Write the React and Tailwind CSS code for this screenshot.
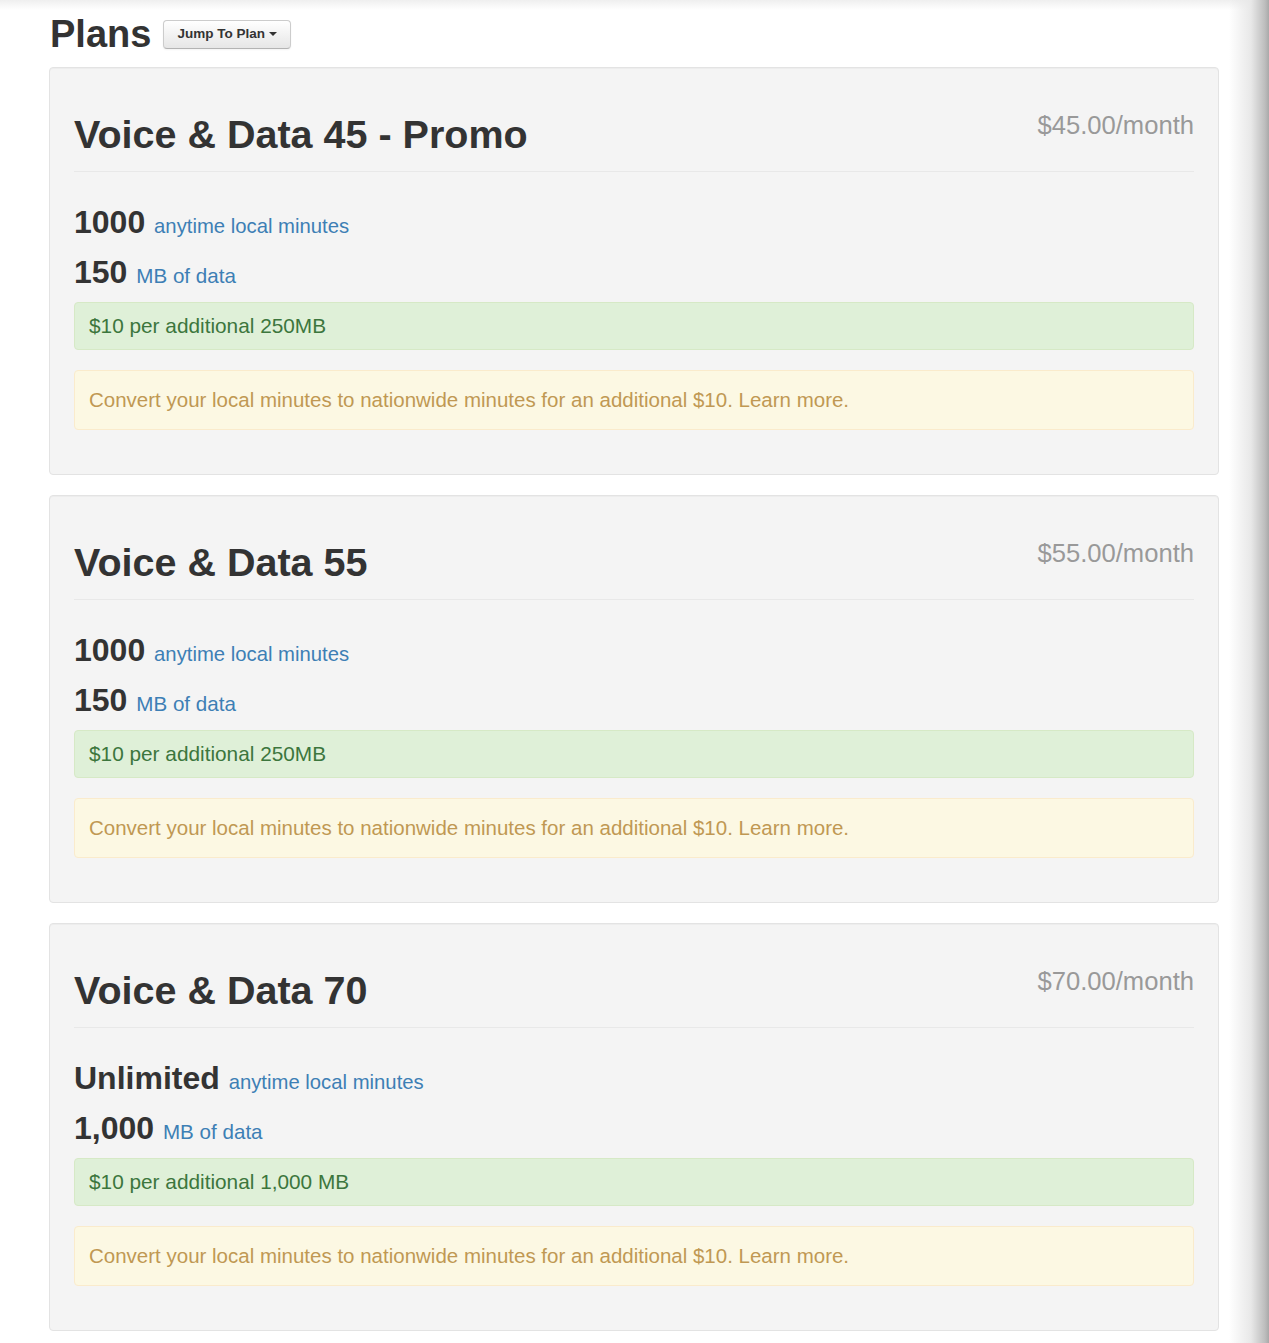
import React from 'react';

const plans = [
  {
    name: 'Voice & Data 45 - Promo',
    price: '$45.00/month',
    minutes: '1000',
    data: '150',
    extra: '$10 per additional 250MB',
  },
  {
    name: 'Voice & Data 55',
    price: '$55.00/month',
    minutes: '1000',
    data: '150',
    extra: '$10 per additional 250MB',
  },
  {
    name: 'Voice & Data 70',
    price: '$70.00/month',
    minutes: 'Unlimited',
    data: '1,000',
    extra: '$10 per additional 1,000 MB',
  },
];

function PlanCard({ plan }) {
  return (
    <div className="rounded-[4px] border border-[#e3e3e3] bg-[#f4f4f4] px-6 pt-[46px] pb-[44px] shadow-[inset_0_1px_1px_rgba(0,0,0,0.03)]">
      {/* header */}
      <div className="flex items-start justify-between border-b border-[#e8e8e8] pb-[17px]">
        <h1 className="text-[39.5px] font-bold leading-[40px] text-[#333]">{plan.name}</h1>
        <span className="mt-[-9px] text-[25.6px] leading-[40px] text-[#999]">{plan.price}</span>
      </div>

      {/* features */}
      <div className="mt-[25px] h-[50px] leading-[50px]">
        <span className="text-[32px] font-bold text-[#333]">{plan.minutes} </span>
        <span className="text-[20.3px] text-[#3d7fb5]">anytime local minutes</span>
      </div>
      <div className="h-[50px] leading-[50px]">
        <span className="text-[32px] font-bold text-[#333]">{plan.data} </span>
        <span className="text-[20.6px] text-[#3d7fb5]">MB of data</span>
      </div>

      {/* alerts */}
      <div className="mt-[5px] rounded-[4px] border border-[#d6e9c6] bg-[#dff0d8] px-[14px] py-[9px] text-[20.8px] leading-[28px] text-[#3c763d]">
        {plan.extra}
      </div>
      <div className="mt-[20px] rounded-[4px] border border-[#faebcc] bg-[#fcf8e3] px-[14px] py-[15px] text-[20.5px] leading-[28px] text-[#c09853]">
        Convert your local minutes to nationwide minutes for an additional $10. Learn more.
      </div>
    </div>
  );
}

export default function App() {
  return (
    <div className="relative min-h-screen w-full bg-white font-['Liberation_Sans',Arial,sans-serif]">
      <div className="ml-[49px] w-[1170px] pb-[12px]">
        <div className="flex h-[67px] items-center gap-3 pl-px pt-[1px]">
          <h1 className="text-[38px] font-bold leading-[40px] text-[#333]">Plans</h1>
          <button className="flex h-[29px] items-center gap-[4px] rounded-[4px] border border-[#ccc] border-b-[#b3b3b3] bg-gradient-to-b from-white to-[#e6e6e6] pl-[13px] pr-[13px] text-[13.5px] font-bold text-[#333] shadow-[inset_0_1px_0_rgba(255,255,255,0.2),0_1px_2px_rgba(0,0,0,0.05)]">
            Jump To Plan
            <span className="inline-block h-0 w-0 border-x-[4px] border-t-[4px] border-x-transparent border-t-[#333]" />
          </button>
        </div>

        <div className="flex flex-col gap-5">
          {plans.map((plan) => (
            <PlanCard key={plan.name} plan={plan} />
          ))}
        </div>
      </div>

      {/* window edge shadows */}
      <div className="pointer-events-none absolute left-0 top-0 h-[10px] w-full bg-gradient-to-b from-[#efefef] to-transparent" />
      <div className="pointer-events-none absolute right-0 top-0 h-full w-[40px] bg-[linear-gradient(to_right,rgba(255,255,255,0),#e8e8e8_55%,#bdbdbd_90%,#a9a9a9)]" />
    </div>
  );
}
